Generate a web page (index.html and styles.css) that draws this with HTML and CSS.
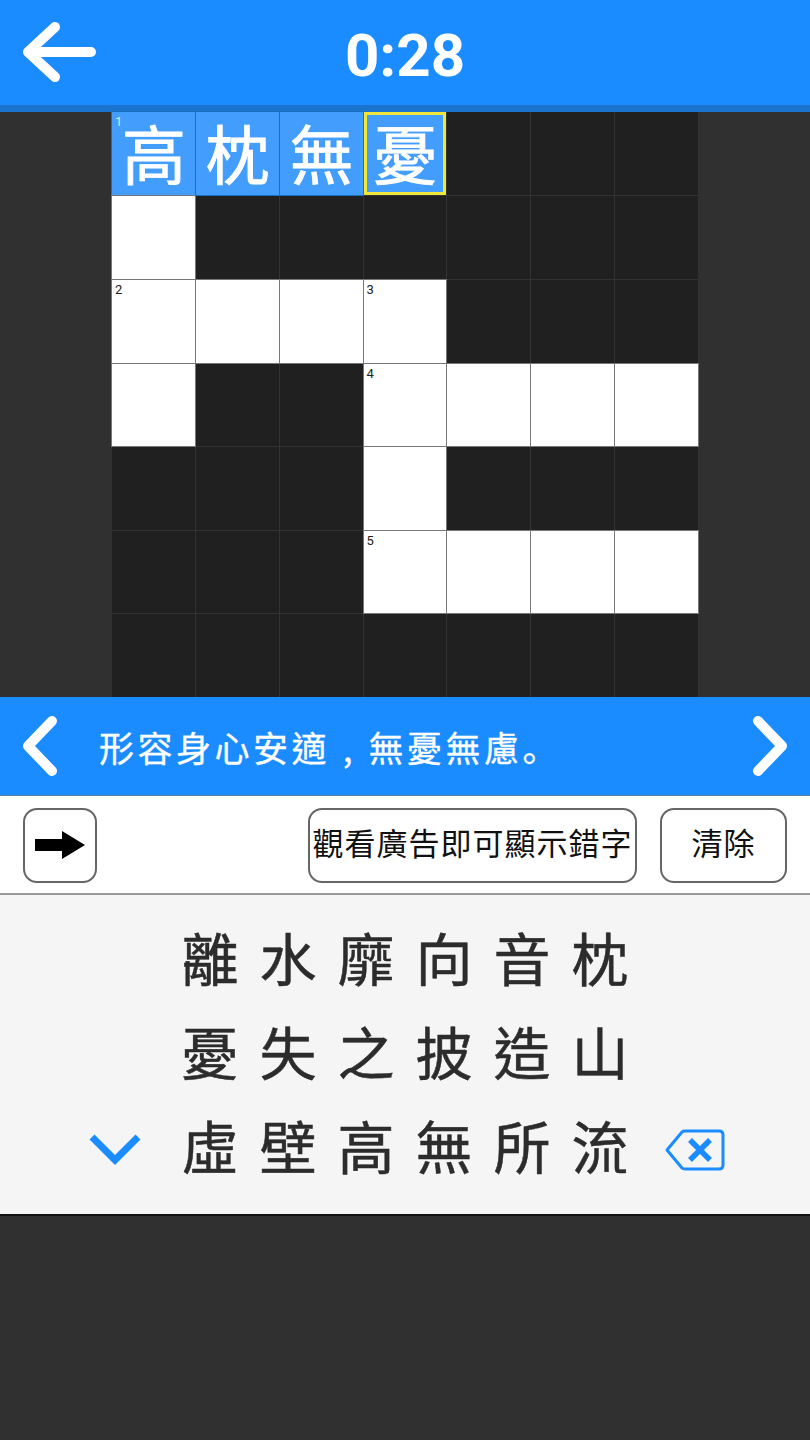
FILE: index.html
```html
<!DOCTYPE html>
<html lang="zh-Hant">
<head>
<meta charset="utf-8">
<title>Crossword</title>
<link rel="stylesheet" href="styles.css">
</head>
<body>
<div class="app">
  <header class="top">
    <svg class="back" viewBox="0 0 76 64" width="76" height="64"><path d="M33 7 L6 32 L33 57 M6 32 H69" fill="none" stroke="#fff" stroke-width="10" stroke-linecap="round" stroke-linejoin="round"/></svg>
    <div class="time">0:28</div>
  </header>
  <div class="strip"></div>
  <main class="board">
    <div class="grid">
      <div class="c a"><span class="n nw">1</span><span class="ch">高</span></div><div class="c a"><span class="ch">枕</span></div><div class="c a"><span class="ch">無</span></div><div class="c a cur"><span class="ch">憂</span></div><div class="c"></div><div class="c"></div><div class="c"></div>
      <div class="c w"></div><div class="c"></div><div class="c"></div><div class="c"></div><div class="c"></div><div class="c"></div><div class="c"></div>
      <div class="c w"><span class="n">2</span></div><div class="c w"></div><div class="c w"></div><div class="c w"><span class="n">3</span></div><div class="c"></div><div class="c"></div><div class="c"></div>
      <div class="c w"></div><div class="c"></div><div class="c"></div><div class="c w"><span class="n">4</span></div><div class="c w"></div><div class="c w"></div><div class="c w"></div>
      <div class="c"></div><div class="c"></div><div class="c"></div><div class="c w"></div><div class="c"></div><div class="c"></div><div class="c"></div>
      <div class="c"></div><div class="c"></div><div class="c"></div><div class="c w"><span class="n">5</span></div><div class="c w"></div><div class="c w"></div><div class="c w"></div>
      <div class="c"></div><div class="c"></div><div class="c"></div><div class="c"></div><div class="c"></div><div class="c"></div><div class="c"></div>
    </div>
  </main>
  <section class="clue">
    <svg class="chev" viewBox="0 0 40 64" width="40" height="64"><path d="M32 7 L8 32 L32 57" fill="none" stroke="#fff" stroke-width="10" stroke-linecap="round" stroke-linejoin="round"/></svg>
    <p class="clue-text">形容身心安適<span class="comma">,</span>無憂無慮<span class="sc" lang="zh-Hans">。</span></p>
    <svg class="chev" viewBox="0 0 40 64" width="40" height="64"><path d="M9 7 L33 32 L9 57" fill="none" stroke="#fff" stroke-width="10" stroke-linecap="round" stroke-linejoin="round"/></svg>
  </section>
  <section class="tools">
    <button class="btn dir"><svg viewBox="0 0 50 28" width="50" height="28"><path d="M0 8 H27 V0 L50 14 L27 28 V20 H0 Z" fill="#000"/></svg></button>
    <button class="btn hint">觀看廣告即可顯示錯字</button>
    <button class="btn clear">清除</button>
  </section>
  <section class="keys">
    <div class="row"><span class="k">離</span><span class="k">水</span><span class="k">靡</span><span class="k">向</span><span class="k">音</span><span class="k">枕</span></div>
    <div class="row"><span class="k">憂</span><span class="k">失</span><span class="k">之</span><span class="k">披</span><span class="k">造</span><span class="k">山</span></div>
    <div class="row last">
      <svg class="down" viewBox="0 0 52 32" width="52" height="32"><path d="M3 3 L26 26 L49 3" fill="none" stroke="#1a8cff" stroke-width="7"/></svg>
      <span class="k">虛</span><span class="k">壁</span><span class="k">高</span><span class="k">無</span><span class="k">所</span><span class="k">流</span>
      <svg class="del" viewBox="0 0 60 42" width="60" height="42"><path d="M2 21 L17 3 Q18 2 20 2 H54 Q58 2 58 6 V36 Q58 40 54 40 H20 Q18 40 17 39 Z" fill="none" stroke="#1a8cff" stroke-width="3" stroke-linejoin="round"/><path d="M25 11 L45 31 M45 11 L25 31" fill="none" stroke="#1a8cff" stroke-width="5.5"/></svg>
    </div>
  </section>
</div>
</body>
</html>
```
FILE: styles.css
```css
* { box-sizing: border-box; }
html, body { margin: 0; padding: 0; }
body { background: #303030; font-family: "Noto Sans CJK TC", "Noto Sans", sans-serif; }
.app { width: 810px; height: 1440px; display: flex; flex-direction: column; overflow: hidden; background: #303030; }
.top { height: 105px; background: #1a8cff; display: flex; align-items: center; justify-content: center; position: relative; }
.back { position: absolute; left: 22px; top: 20px; }
.time { font-family: Roboto, sans-serif; font-weight: 700; font-size: 60px; color: #fff; line-height: 105px; padding-top: 6px; }
.strip { height: 7px; background: #1a73cc; }
.board { height: 585px; display: flex; justify-content: center; }
.grid { width: 586px; height: 585px; display: grid; grid-template-columns: repeat(7, 1fr); grid-template-rows: 83px 83px 83px 82px 83px 82px 83px; gap: 1px; background: #333; }
.c { background: #202020; position: relative; display: flex; align-items: center; justify-content: center; min-width: 0; min-height: 0; }
.w { background: #fff; outline: 1px solid #777; }
.a { background: #429dfc; outline: 1px solid #1a6fc0; }
.cur { outline: none; border: 3px solid #f0e63c; }
.ch { color: #fff; font-size: 64px; -webkit-text-stroke: 0.9px #fff; line-height: 1; padding: 0 0 6px 1px; }
.n { position: absolute; left: 3px; top: 3px; font-family: Roboto, sans-serif; font-size: 13px; line-height: 14px; color: #222; }
.nw { color: #dcecff; }
.clue { height: 99px; background: #1a8cff; border-bottom: 1px solid #5a7f9f; display: flex; align-items: center; padding: 0 21px 0 20px; }
.chev { flex: none; }
.clue-text { flex: 1; margin: 0; padding-left: 39px; color: #fff; font-size: 35px; -webkit-text-stroke: 0.3px #fff; line-height: 1; letter-spacing: 3.5px; white-space: nowrap; }
.comma { display: inline-block; width: 38.5px; text-align: center; }
.sc { font-family: "Noto Sans CJK SC", sans-serif; }
.tools { height: 99px; background: #fff; border-bottom: 2px solid #999; display: flex; align-items: center; padding: 2px 23px 0 23px; }
.btn { height: 75px; background: #fff; border: 2px solid #666; border-radius: 14px; font-family: "Noto Sans CJK TC", sans-serif; font-size: 31px; letter-spacing: 1px; color: #111; padding: 0 0 8px; display: flex; align-items: center; justify-content: center; white-space: nowrap; }
.dir { width: 74px; padding: 0 0 2px; }
.hint { width: 329px; margin-left: auto; }
.clear { width: 127px; margin-left: 23px; }
.keys { height: 321px; background: #f5f5f5; border-bottom: 2px solid #111; padding-top: 14px; display: flex; flex-direction: column; align-items: center; }
.row { height: 94px; display: flex; align-items: center; justify-content: center; position: relative; }
.k { width: 78px; text-align: center; font-size: 57px; -webkit-text-stroke: 0.5px #2c2c2c; line-height: 1; color: #2c2c2c; }
.down { position: absolute; left: -82px; top: 37px; }
.del { position: absolute; right: -86px; top: 32px; }
```
